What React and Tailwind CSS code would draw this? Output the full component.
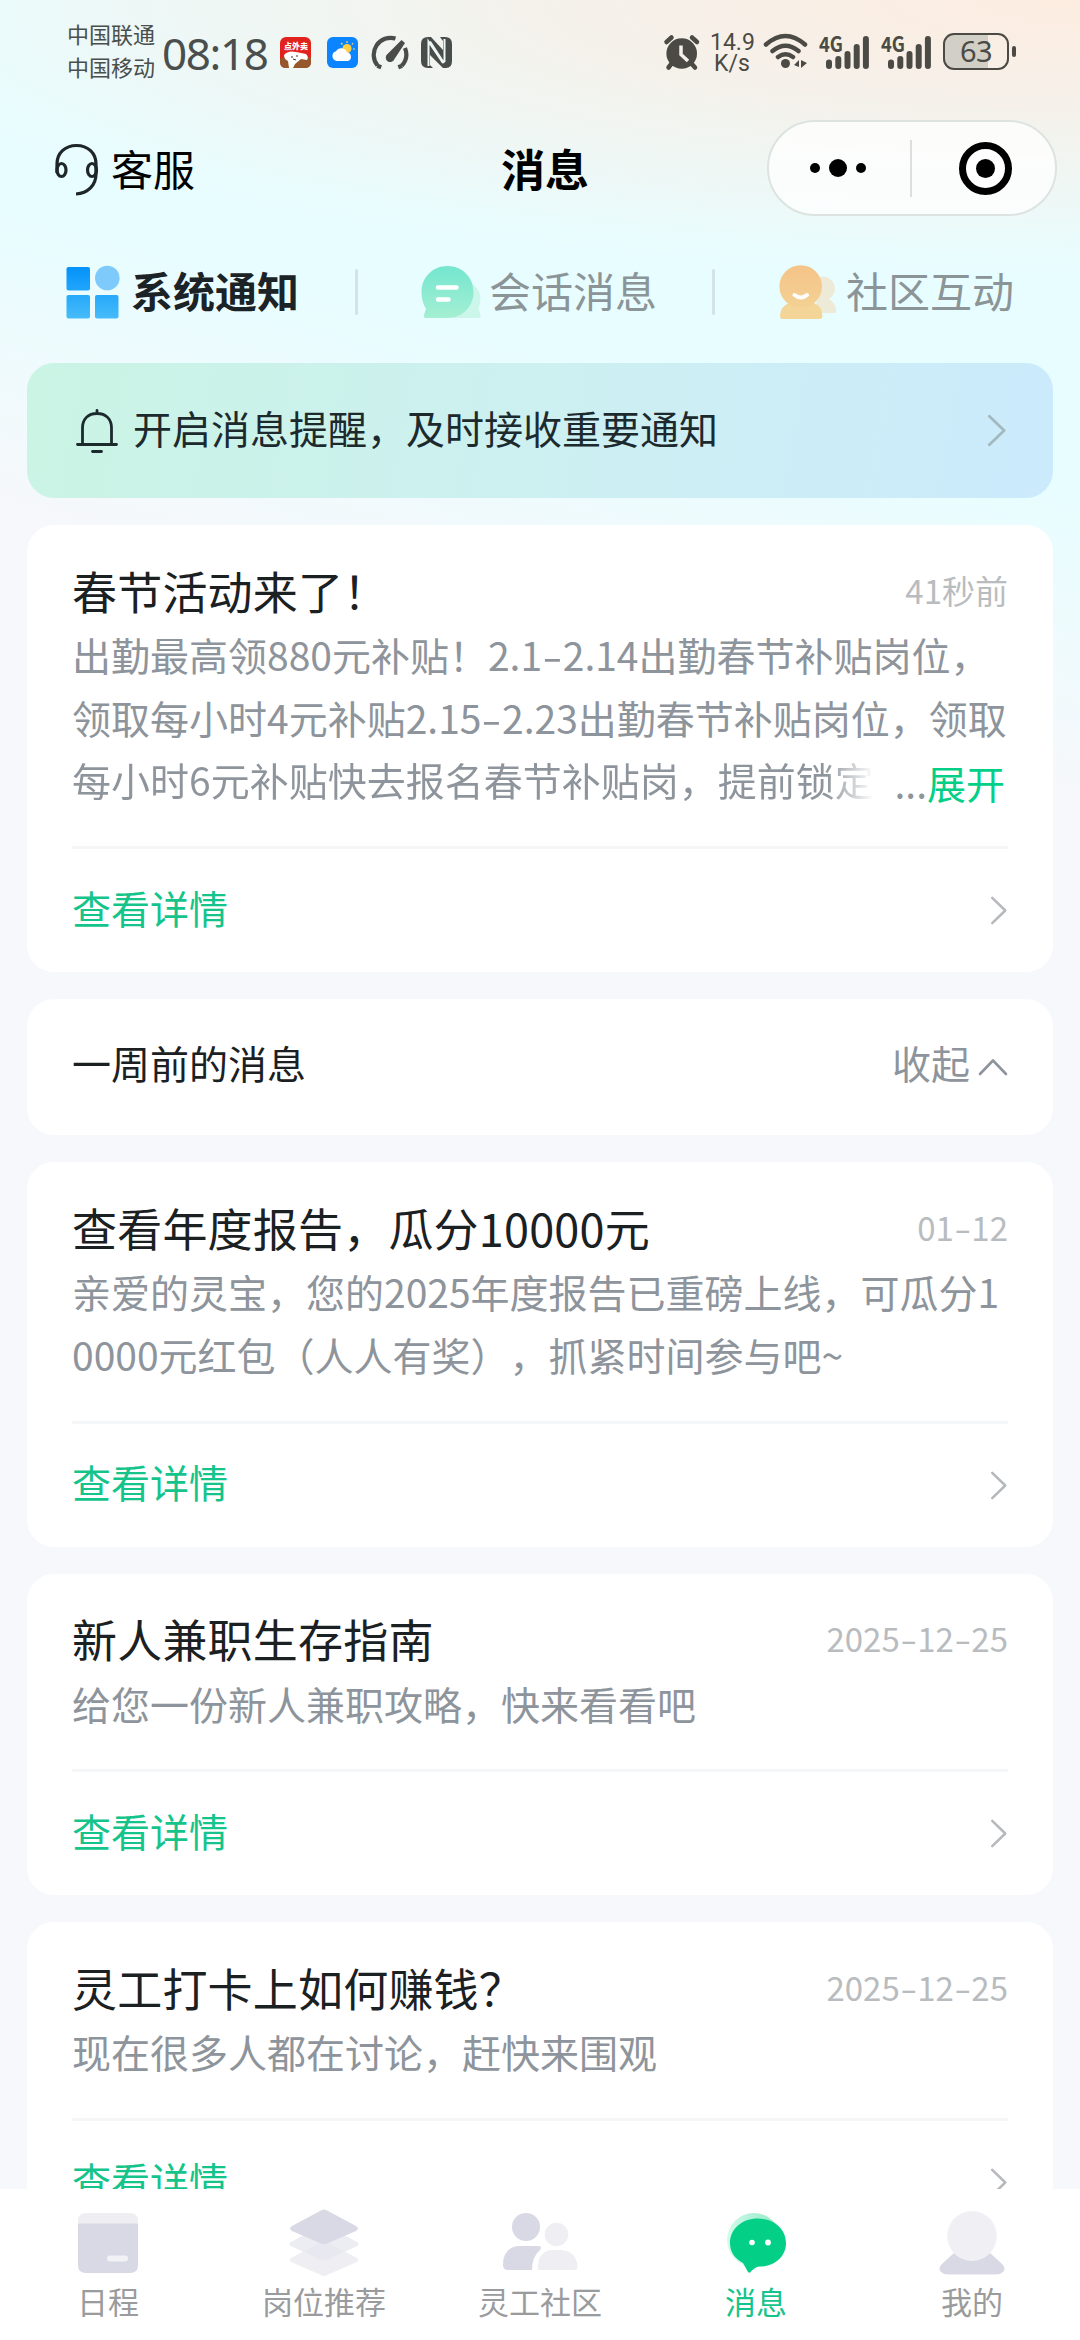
import React from "react";

const messages = [
  {
    title: "查看年度报告，瓜分10000元",
    time: "01-12",
    lines: ["亲爱的灵宝，您的2025年度报告已重磅上线，可瓜分1", "0000元红包（人人有奖），抓紧时间参与吧~"],
  },
  { title: "新人兼职生存指南", time: "2025-12-25", lines: ["给您一份新人兼职攻略，快来看看吧"] },
  { title: "灵工打卡上如何赚钱？", time: "2025-12-25", lines: ["现在很多人都在讨论，赶快来围观"] },
];

// digits keep their width, only the dash is stretched
const WideDash = ({ text }) =>
  text.split("-").map((part, i) => (
    <React.Fragment key={i}>
      {i > 0 && <span className="inline-block w-[0.53em] scale-x-150 text-center">-</span>}
      {part}
    </React.Fragment>
  ));

const Chevron = ({ className }) => (
  <svg className={className} viewBox="0 0 18 30" fill="none" stroke="currentColor" strokeWidth="2.6">
    <path d="M2 2 L15.5 15 L2 28" strokeLinecap="round" strokeLinejoin="round" />
  </svg>
);

const Signal = ({ className }) => (
  <div className={className}>
    <svg className="overflow-visible" width="52" height="38" viewBox="0 0 52 38">
      <text x="0" y="18" fontSize="21" fontWeight="700" textLength="24" lengthAdjust="spacingAndGlyphs" fill="#4b4a44">4G</text>
      <g stroke="#4b4a44" strokeWidth="6" strokeLinecap="round">
        <path d="M10 28.500v3.500M19.300 25v7M28.500 20v12M37.700 13v19M46.900 5v27" />
      </g>
    </svg>
  </div>
);

const StatusBar = () => (
  <div className="flex h-[107px] shrink-0 pt-[17px] text-[#4a4f4d]">
    <div className="ml-[67px] w-[95px] text-[22px] leading-[33px]">
      <div>中国联通</div>
      <div>中国移动</div>
    </div>
    <div className="mt-[4px] w-[118px] font-['Noto_Sans'] text-[44px] leading-[64px] tracking-[-1.4px]">08:18</div>
    <svg className="mt-[20px]" width="31" height="31" viewBox="0 0 31 31">
      <rect width="31" height="31" rx="6" fill="#e2231d" />
      <path d="M0 22 Q6 18 11 22 L31 20 V25 Q31 31 25 31 H6 Q0 31 0 25Z" fill="#96572c" />
      <path d="M4 18 Q8 13 16 15 L26 17 Q29 20 27 23 L21 22 L15 27 L13 31 H9 L8 24 Q4 22 4 18Z" fill="#fff" />
      <path d="M11 20h2M16 19h2M13 22l3 1" stroke="#333" strokeWidth="1" />
      <text x="4" y="12" fontSize="8" fontWeight="900" fill="#fff">点外卖</text>
    </svg>
    <svg className="ml-[16px] mt-[20px]" width="31" height="31" viewBox="0 0 31 31">
      <rect width="31" height="31" rx="6" fill="#0a84ff" />
      <path d="M20 4v2M26 6l-1 1.5M28 12h-2M14 6l1.5 1.5" stroke="#ffd76a" strokeWidth="1.2" />
      <circle cx="20" cy="11.500" r="4.500" fill="#ffd044" />
      <path d="M9.500 24a5 5 0 0 1-.5-9.700 6 6 0 0 1 11 1 4.500 4.500 0 0 1 1 8.700z" fill="#fff" />
    </svg>
    <svg className="ml-[12px] mt-[18px]" width="40" height="36" viewBox="0 0 40 36" fill="none" stroke="#484c4a">
      <path d="M8.500 33.500L10 29.500M7.500 30.500A17 17 0 0 1 25.500 3.500" strokeWidth="4.200" />
      <path d="M31 33.500L29.500 29.500M35 13A17 17 0 0 1 32 30.500" strokeWidth="4.200" />
      <path d="M31.500 5L35 8L24.500 24A4.500 4.500 0 1 1 17.500 19Z" fill="#484c4a" stroke="none" />
    </svg>
    <svg className="ml-[11px] mt-[20px]" width="31" height="31" viewBox="0 0 31 31">
      <path d="M7 0H10L22 13V4L19 0H24Q31 0 31 7V24Q31 31 25 31H22L9 18V28L12 31H7Q0 31 0 24V7Q0 0 7 0Z" fill="#484c4a" />
      <path d="M7.500 29V4.500L22 26M23.500 2V25M9 4.500L23 26" fill="none" stroke="#edf7f3" strokeWidth="2" />
    </svg>

    <div className="ml-auto mr-[64px] flex items-start text-[#4b4a44]">
      <svg className="mt-[17px]" width="38" height="37" viewBox="0 0 38 37">
        <g stroke="#4b4a44" strokeWidth="4.500" strokeLinecap="round">
          <path d="M3.500 8L8.500 3.500M34 8L29 3.500M9 29L5.500 33.500M28 29L32 33.500" />
        </g>
        <circle cx="18.700" cy="19.500" r="15.300" fill="#4b4a44" />
        <path d="M18 11.500V20.500L25 27" fill="none" stroke="#f3f1ea" strokeWidth="3.500" />
      </svg>
      <div className="ml-[9px] mt-[15px] w-[44px] text-center font-['Roboto'] text-[23px] leading-[21px]">
        <div>14.9</div>
        <div>K/s</div>
      </div>
      <svg className="ml-[9px] mt-[16px]" width="46" height="37" viewBox="0 0 46 37" fill="none" stroke="#4b4a44" strokeWidth="4.500" strokeLinecap="round">
        <path d="M3 11.500Q22.500-5.500 42 11.500M9.500 18Q22.500 7.500 35.500 18M15 24Q22.500 18.500 30 24" />
        <circle cx="22.500" cy="30.500" r="4.500" fill="#4b4a44" stroke="none" />
        <path d="M31 32L36 27V34ZM38 27V35L44 30Z" fill="#4b4a44" stroke="none" />
      </svg>
      <Signal className="ml-[10px] mt-[17px]" />
      <Signal className="ml-[10px] mt-[17px]" />
      <div className="ml-[10px] mt-[16px] flex items-center">
        <div className="h-[37px] w-[66px] rounded-[11px] border-[2.500px] border-[#4b4a44] bg-[linear-gradient(90deg,#d2cfc7_70%,transparent_70%)] text-center font-['Noto_Sans'] text-[29px] leading-[32px] tracking-[-0.5px]">63</div>
        <div className="ml-[3px] h-[11px] w-[4px] rounded-[2px] bg-[#4b4a44]" />
      </div>
    </div>
  </div>
);

const Header = () => (
  <div className="grid h-[122px] shrink-0 grid-cols-3 items-center text-black">
    <div className="flex items-center pl-[54px]">
      <svg className="mt-[3px]" width="46" height="54" viewBox="0 0 46 54" fill="none" stroke="#1e2628" strokeWidth="3.200">
        <path d="M3 30V21C3 10 11 2.500 22.500 2.500S42 10 42 21V31C42 42 34 50.500 22 51" />
        <ellipse cx="7.500" cy="27" rx="4.500" ry="6.500" />
        <ellipse cx="38" cy="27" rx="4.500" ry="6.500" />
      </svg>
      <span className="ml-[11px] text-[42px] leading-[60px]">客服</span>
    </div>
    <div className="pl-[10px] text-center text-[44px] font-bold leading-[60px]">消息</div>
    <div className="ml-auto mr-[23px] flex h-[96px] w-[290px] items-center rounded-full border-2 border-[#dde3e0] bg-white/75">
      <div className="flex flex-1 items-center justify-center gap-[9px] pr-[2px]">
        <i className="size-[10px] rounded-full bg-black" />
        <i className="size-[18px] rounded-full bg-black" />
        <i className="size-[10px] rounded-full bg-black" />
      </div>
      <div className="h-[57px] w-[2px] bg-[#dcdfde]" />
      <div className="flex flex-1 justify-center pl-[5px]">
        <div className="flex size-[53px] items-center justify-center rounded-full border-[7px] border-black bg-white">
          <i className="size-[19px] rounded-full bg-black" />
        </div>
      </div>
    </div>
  </div>
);

const Tabs = () => (
  <div className="flex h-[134px] shrink-0 items-center pl-[66px] pb-[9px] text-[42px] leading-[60px] text-[#8b9598]">
    <svg width="54" height="54" viewBox="0 0 54 54">
      <defs>
        <linearGradient id="tile" x1="0" y1="0" x2="0" y2="54" gradientUnits="userSpaceOnUse">
          <stop stopColor="#0091fb" />
          <stop offset="1" stopColor="#47bcfa" />
        </linearGradient>
      </defs>
      <rect x="0.500" y="2" width="23.500" height="23.500" rx="2" fill="url(#tile)" />
      <rect x="0.500" y="30" width="23.500" height="23.500" rx="2" fill="url(#tile)" />
      <rect x="29" y="30" width="23.500" height="23.500" rx="2" fill="url(#tile)" />
      <circle cx="41.300" cy="13" r="12.300" fill="#7ecafb" />
    </svg>
    <span className="ml-[11px] pb-[4px] font-bold text-[#1b2326]">系统通知</span>
    <i className="ml-[56px] h-[46px] w-[3px] rounded bg-[#d3e3e6]" />
    <svg className="ml-[63px]" width="61" height="54" viewBox="0 0 61 54">
      <defs>
        <linearGradient id="bubble" x1="0" y1="0" x2="0" y2="1">
          <stop stopColor="#74e6cf" />
          <stop offset="1" stopColor="#a4efd2" />
        </linearGradient>
      </defs>
      <path d="M50 18Q60 24 59.500 35Q59 40 57.500 43L59.500 50Q60 53 57 53H30Z" fill="#cdf6ea" />
      <path d="M26.500 1C41 1 52.500 12 52.500 27S41 53 26.500 53H5Q2 53 3 50L5 44Q0.500 37 0.500 27C0.500 12 12 1 26.500 1Z" fill="url(#bubble)" />
      <path d="M17 22.500H35.500M17 34.500H27.500" stroke="#fff" strokeWidth="4.500" strokeLinecap="round" />
    </svg>
    <span className="ml-[7px] pb-[4px]">会话消息</span>
    <i className="ml-[55px] h-[46px] w-[3px] rounded bg-[#d3e3e6]" />
    <svg className="ml-[64px]" width="59" height="56" viewBox="0 0 59 56">
      <defs>
        <linearGradient id="face" x1="0" y1="0" x2="0" y2="56" gradientUnits="userSpaceOnUse">
          <stop stopColor="#f5c388" />
          <stop offset="1" stopColor="#f3d597" />
        </linearGradient>
      </defs>
      <path d="M41 13A12 12 0 0 1 50 35Q58 40 57 48Q57 49 55 49H36Z" fill="#eeead8" />
      <path d="M10 39H35Q43 42 43.500 52Q43.500 55 40 55H4Q0.500 55 1 51Q2 42 10 39Z" fill="#f3d597" />
      <circle cx="21.700" cy="22.500" r="21.300" fill="url(#face)" />
      <path d="M15.500 31Q22 36 28 31" fill="none" stroke="#fff" strokeWidth="4" strokeLinecap="round" />
    </svg>
    <span className="ml-[8px] pb-[4px]">社区互动</span>
  </div>
);

const Banner = () => (
  <div className="flex h-[135px] shrink-0 items-center rounded-[27px] bg-[linear-gradient(100deg,#caf4e4,#cdf0f1_50%,#cbeafc)] pl-[48px] pr-[46px] text-[39px] text-[#1c2a2e]">
    <svg width="44" height="46" viewBox="0 0 44 46" fill="none" stroke="#1c2a2e" strokeWidth="2.800" strokeLinecap="round">
      <path d="M2.500 36.500H41.500M7.500 36V20C7.500 11 13 5.500 22 5.500S36.500 11 36.500 20V36M22 2.500V5M17.500 43.500H26.500" />
    </svg>
    <span className="ml-[14px] pb-[7px]">开启消息提醒，及时接收重要通知</span>
    <Chevron className="ml-auto h-[33px] w-[20px] text-[#a3b9c0]" />
  </div>
);

const Card = ({ title, time, children }) => (
  <div className="shrink-0 rounded-[27px] bg-white px-[45px] pt-[32px]">
    <div className="flex h-[66px] items-center justify-between leading-[63px]">
      <span className="text-[45px] tracking-[0.2px] text-[#1b2022]">{title}</span>
      <span className="text-[33px] text-[#b9bcbf]">
        <WideDash text={time} />
      </span>
    </div>
    <div className="text-[39px] leading-[62.700px] text-[#8e949b]">{children}</div>
    <div className="mt-[35px] flex h-[126px] items-center justify-between border-t-[3px] border-[#f5f6f7]">
      <span className="pb-[7px] text-[39px] text-[#15c48b]">查看详情</span>
      <Chevron className="h-[29px] w-[18px] text-[#b6b9bc]" />
    </div>
  </div>
);

const items = [
  {
    label: "日程",
    icon: (
      <>
        <path d="M6 15V12Q6 4 14 4H58Q66 4 66 12V15Z" fill="#efeff3" />
        <path d="M6 14.500H66V56Q66 64 58 64H14Q6 64 6 56Z" fill="#d9d9e5" />
        <path d="M38 49.500H53" stroke="#f1f1f6" strokeWidth="6" strokeLinecap="round" />
      </>
    ),
  },
  {
    label: "岗位推荐",
    icon: (
      <>
        <path d="M3 53Q0 51 3 49L33 33Q36 32 39 33L69 49Q72 51 69 53L39 66Q36 68 33 66Z" fill="#efeff3" />
        <path d="M3 37Q0 35 3 33L33 17Q36 16 39 17L69 33Q72 35 69 37L39 51Q36 52 33 51Z" fill="#e6e6ef" fillOpacity="0.75" />
        <path d="M4 22Q0 19.500 4 17L32 2Q36 -1 40 2L68 17Q72 19.500 68 22L40 34Q36 36 32 34Z" fill="#d9d9e5" />
      </>
    ),
  },
  {
    label: "灵工社区",
    icon: (
      <>
        <circle cx="22" cy="18" r="14" fill="#d9d9e5" />
        <path d="M14 37H34Q39 37 36 41Q28 48 28 61H4Q-1 61-1 56Q-1 39 14 37Z" fill="#d9d9e5" />
        <circle cx="52.500" cy="25.500" r="11.800" fill="#efeff3" />
        <path d="M47 41H57Q72 42 73.500 57Q73.500 61 70 61H34Q33 43 47 41Z" fill="#efeff3" />
      </>
    ),
  },
  {
    label: "消息",
    active: true,
    icon: (
      <>
        <defs>
          <linearGradient id="halo" x1="0" y1="0.300" x2="1" y2="0">
            <stop stopColor="#d3fbea" />
            <stop offset="1" stopColor="#8fe8c4" />
          </linearGradient>
        </defs>
        <circle cx="34" cy="31" r="27" fill="url(#halo)" />
        <path d="M38 9.500C54 9.500 66 20 66 34S54 58 39 57.500Q35 58 30 63.500Q29 64 28 63L23 54Q10 47 10 34C10 20 22 9.500 38 9.500Z" fill="#03cf87" />
        <circle cx="32" cy="33.500" r="2.800" fill="#fff" />
        <circle cx="48" cy="33.500" r="2.900" fill="#fff" />
      </>
    ),
  },
  {
    label: "我的",
    icon: (
      <>
        <path d="M18 44H54L64 53Q71 59 67 63Q64 65.500 60 65.500H12Q8 65.500 5 63Q1 59 8 53Z" fill="#d9d9e5" />
        <ellipse cx="36" cy="27" rx="24.800" ry="25" fill="#efeff4" />
      </>
    ),
  },
];

const TabBar = () => (
  <div className="grid h-[151px] shrink-0 grid-cols-5 bg-white pt-[20px] text-center">
    {items.map((item) => (
      <div key={item.label} className="flex flex-col items-center">
        <svg className="overflow-visible" width="72" height="68" viewBox="0 0 72 68">{item.icon}</svg>
        <span className={item.active ? "mt-[2px] text-[31px] leading-[44px] text-[#15c48b]" : "mt-[2px] text-[31px] leading-[44px] text-[#999b9d]"}>
          {item.label}
        </span>
      </div>
    ))}
  </div>
);

const App = () => {
  return (
    <div className="flex h-[2340px] w-[1080px] flex-col overflow-hidden bg-[#f6f8fb] bg-[radial-gradient(ellipse_1250px_270px_at_100%_0%,#fdece0_0%,#f5f1ea_40%,transparent_100%),linear-gradient(195deg,#e8fdff_0%,#e8fdff_46%,#f6f8fb_73%)] bg-[length:1080px_800px] bg-no-repeat font-['Noto_Sans_CJK_SC',sans-serif] whitespace-nowrap [text-spacing-trim:space-all]">
      <StatusBar />
      <Header />
      <Tabs />
      <div className="flex min-h-0 flex-1 flex-col gap-[27px] overflow-hidden px-[27px]">
        <Banner />
        <Card title="春节活动来了！" time="41秒前">
          <div>
            <WideDash text="出勤最高领880元补贴！2.1-2.14出勤春节补贴岗位，" />
          </div>
          <div>
            <WideDash text="领取每小时4元补贴2.15-2.23出勤春节补贴岗位，领取" />
          </div>
          <div className="flex h-[62.700px]">
            <div className="bg-[linear-gradient(90deg,#8e949b_94%,#ffffff_100%)] bg-clip-text text-transparent">
              每小时6元补贴快去报名春节补贴岗，提前锁定
            </div>
            <div className="ml-auto pr-[3px] pt-[3px]">
              ...<span className="text-[#03cf87]">展开</span>
            </div>
          </div>
        </Card>
        <div className="flex h-[136px] shrink-0 items-center justify-between rounded-[27px] bg-white px-[45px] text-[39px]">
          <span className="pb-[9px] text-[#1b2022]">一周前的消息</span>
          <div className="flex items-center text-[#8e949b]">
            <span className="pb-[9px]">收起</span>
            <svg className="ml-[8px]" width="30" height="18" viewBox="0 0 30 18" fill="none" stroke="currentColor" strokeWidth="2.600">
              <path d="M2 16L15 2.500L28 16" strokeLinecap="round" strokeLinejoin="round" />
            </svg>
          </div>
        </div>
        {messages.map((msg) => (
          <Card key={msg.title} title={msg.title} time={msg.time}>
            {msg.lines.map((line) => (
              <div key={line}>{line}</div>
            ))}
          </Card>
        ))}
      </div>
      <TabBar />
    </div>
  );
};

export default App;
